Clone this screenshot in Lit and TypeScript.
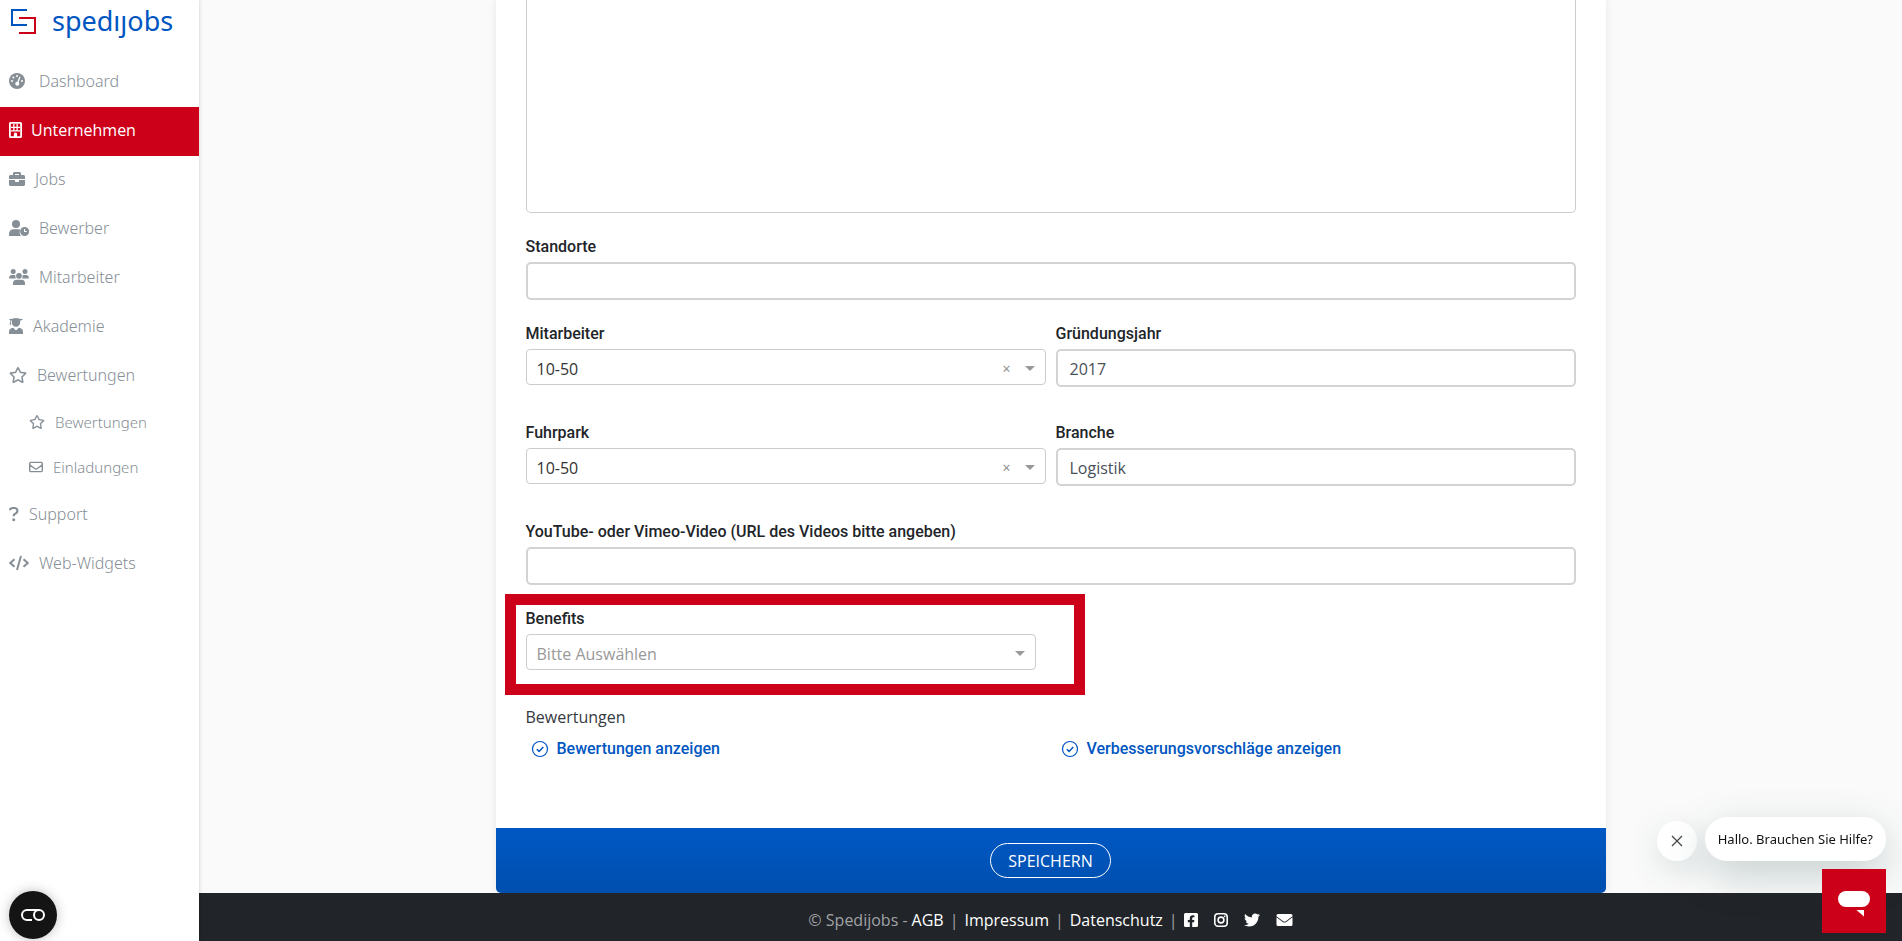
import { LitElement, html, css, svg, nothing } from "lit";
import { customElement } from "lit/decorators.js";
import { classMap } from "lit/directives/class-map.js";

const STAR =
  "M528.1 171.5L382 150.2 316.7 17.8c-11.7-23.6-45.6-23.9-57.4 0L194 150.2 47.9 171.5c-26.2 3.8-36.7 36.1-17.7 54.6l105.7 103-25 145.5c-4.5 26.3 23.2 46 46.4 33.7L288 439.6l130.7 68.7c23.2 12.2 50.9-7.4 46.4-33.7l-25-145.5 105.7-103c19-18.5 8.5-50.8-17.7-54.6zM388.6 312.3l23.7 138.4L288 385.4l-124.3 65.3 23.7-138.4-100.6-98 139-20.2 62.2-126 62.2 126 139 20.2-100.6 98z";
const BRIEFCASE =
  "M320 336c0 8.84-7.16 16-16 16h-96c-8.84 0-16-7.16-16-16v-48H0v144c0 25.6 22.4 48 48 48h416c25.6 0 48-22.4 48-48V288H320v48zm144-208h-80V80c0-25.6-22.4-48-48-48H176c-25.6 0-48 22.4-48 48v48H48c-25.6 0-48 22.4-48 48v80h512v-80c0-25.6-22.4-48-48-48zm-144 0H192V96h128v32z";
const TWITTER =
  "M459.37 151.716c.325 4.548.325 9.097.325 13.645 0 138.72-105.583 298.558-298.558 298.558-59.452 0-114.68-17.219-161.137-47.106 8.447.974 16.568 1.299 25.34 1.299 49.055 0 94.213-16.568 130.274-44.832-46.132-.975-84.792-31.188-98.112-72.772 6.498.974 12.995 1.624 19.818 1.624 9.421 0 18.843-1.3 27.614-3.573-48.081-9.747-84.143-51.98-84.143-102.985v-1.299c13.969 7.797 30.214 12.67 47.431 13.319-28.264-18.843-46.781-51.005-46.781-87.391 0-19.492 5.197-37.36 14.294-52.954 51.655 63.675 129.3 105.258 216.365 109.807-1.624-7.797-2.599-15.918-2.599-24.04 0-57.828 46.782-104.934 104.934-104.934 30.213 0 57.502 12.67 76.67 33.137 23.715-4.548 46.456-13.32 66.599-25.34-7.798 24.366-24.366 44.833-46.132 57.827 21.117-2.273 41.584-8.122 60.426-16.243-14.292 20.791-32.161 39.308-52.628 54.253z";
const FACEBOOK =
  "M400 32H48A48 48 0 0 0 0 80v352a48 48 0 0 0 48 48h137.25V327.69h-63V256h63v-54.64c0-62.15 37-96.48 93.67-96.48 27.14 0 55.52 4.84 55.52 4.84v61h-31.27c-30.81 0-40.42 19.12-40.42 38.73V256h68.78l-11 71.69h-57.78V480H400a48 48 0 0 0 48-48V80a48 48 0 0 0-48-48z";

const icon = (w: number, h: number, box: string, body: unknown) =>
  html`<svg width=${w} height=${h} viewBox=${box} fill="currentColor" aria-hidden="true">${body}</svg>`;

const icons = {
  gauge: icon(20, 16, "0 0 20 16", svg`
    <circle cx="8" cy="8" r="8"/>
    <g fill="#fff"><circle cx="8" cy="3" r="1"/><circle cx="4.4" cy="4.5" r="1"/><circle cx="3" cy="8" r="1"/><circle cx="13" cy="8" r="1"/>
    <path d="M10.5 3.4l1.1.5-2 5.3a2 2 0 1 1-1.3-.5z"/></g>`),
  building: icon(13, 16, "0 0 13 16", svg`
    <path fill-rule="evenodd" d="M1.500 0h10A1.500 1.500 0 0 1 13 1.500v13a1.500 1.500 0 0 1-1.500 1.500h-10A1.500 1.500 0 0 1 0 14.500v-13A1.500 1.500 0 0 1 1.500 0zM1.800 1.800v12.400h3.100V12a1.600 1.600 0 0 1 3.200 0v2.200h3.100V1.800z"/>
    <path d="M2 4.700h9V6H2zM2 8.300h9v1.300H2zM4.200 2h1.300v7.500H4.200zM7.500 2h1.300v7.500H7.500z"/>`),
  briefcase: icon(16, 16, "0 0 512 512", svg`<path d=${BRIEFCASE}/>`),
  userClock: icon(20, 16, "0 0 20 16", svg`
    <circle cx="7" cy="4" r="4"/>
    <path d="M4.500 9.200h5q1.100 0 2 .5a5.600 5.600 0 0 0 .4 6.300H0v-2.300a4.500 4.500 0 0 1 4.500-4.500z"/>
    <path fill-rule="evenodd" d="M15.600 7a4.500 4.500 0 1 1 0 9 4.500 4.500 0 0 1 0-9zm-.6 2v3h2.700v-1.100h-1.600V9z"/>`),
  users: icon(20, 16, "0 0 20 16", svg`
    <circle cx="4.200" cy="2.500" r="2.500"/><circle cx="16" cy="2.500" r="2.500"/><circle cx="10" cy="6.800" r="2.900"/>
    <path d="M2.800 6h2.700l.9.300A4.500 4.500 0 0 0 7 9.500H.2V8.700A2.700 2.700 0 0 1 2.800 6zM14.500 6h2.700a2.700 2.700 0 0 1 2.600 2.700v.8H13a4.500 4.500 0 0 0 .6-3.200zM7.500 10.700h5A3.500 3.500 0 0 1 16 14.200V16H4v-1.800a3.500 3.500 0 0 1 3.500-3.500z"/>`),
  graduate: icon(14, 16, "0 0 14 16", svg`
    <path d="M7 0l6.600 1.200q.8.300 0 .7l-2.400.6v2a4.200 4.200 0 0 1-8.400 0v-2l-1-.2v2l.6 2.500H.6l.5-2.500V2L.4 1.900q-.8-.4 0-.7zM4.200 9.700L7 12.600l2.800-2.900a4.500 4.500 0 0 1 4.200 4.500V16H0v-1.800a4.500 4.500 0 0 1 4.200-4.500z"/>`),
  star: icon(18, 16, "0 0 576 512", svg`<path d=${STAR}/>`),
  starSmall: icon(16, 14, "0 0 576 512", svg`<path d=${STAR}/>`),
  mail: icon(14, 14, "0 0 14 14", svg`
    <path d="M1.700 2.400h10.600a1 1 0 0 1 1 1v7.200a1 1 0 0 1-1 1H1.700a1 1 0 0 1-1-1V3.400a1 1 0 0 1 1-1zM1 5l4.700 3.500a2.200 2.200 0 0 0 2.600 0L13 5" fill="none" stroke="currentColor" stroke-width="1.400"/>`),
  question: icon(10, 16, "0 0 10 16", svg`
    <path d="M1.100 4.200V3.800Q1.300 2 4 2h1.500A2.800 2.800 0 0 1 7 7.200Q4.700 8.300 4.700 9.800v.4" fill="none" stroke="currentColor" stroke-width="2.200"/><circle cx="4.700" cy="13.700" r="1.500"/>`),
  code: icon(20, 16, "0 0 20 16", svg`
    <path d="M5.500 4.300L1.300 8l4.200 3.700M14.500 4.300L18.700 8l-4.200 3.700M12 .9L8 15.100" fill="none" stroke="currentColor" stroke-width="2"/>`),
  check: icon(18, 18, "0 0 18 18", svg`
    <circle cx="9" cy="9" r="7.500" fill="none" stroke="currentColor" stroke-width="1.200"/>
    <path d="M5.800 9.200l2.300 2.200 4.200-4.300" fill="none" stroke="currentColor" stroke-width="1.500"/>`),
  facebook: icon(14, 16, "0 0 448 512", svg`<path d=${FACEBOOK}/>`),
  instagram: icon(14, 16, "0 0 14 16", svg`
    <rect x=".8" y="1.800" width="12.400" height="12.400" rx="3.300" fill="none" stroke="currentColor" stroke-width="1.600"/>
    <circle cx="7" cy="8" r="2.900" fill="none" stroke="currentColor" stroke-width="1.600"/><circle cx="10.700" cy="4.300" r=".9"/>`),
  twitter: icon(16, 16, "0 0 512 512", svg`<path d=${TWITTER}/>`),
  envelope: icon(17, 16, "0 0 16 16", svg`
    <path d="M1.500 2h13A1.500 1.500 0 0 1 16 3.500v.8l-6.700 5a2.200 2.200 0 0 1-2.600 0L0 4.300v-.8A1.500 1.500 0 0 1 1.500 2zM0 5.300l6.200 4.600a3 3 0 0 0 3.600 0L16 5.300v7.200a1.500 1.500 0 0 1-1.500 1.500h-13A1.500 1.500 0 0 1 0 12.500z"/>`),
};

interface NavItem {
  label: string;
  glyph: unknown;
  active?: boolean;
  sub?: boolean;
}

const NAV: NavItem[] = [
  { label: "Dashboard", glyph: icons.gauge },
  { label: "Unternehmen", glyph: icons.building, active: true },
  { label: "Jobs", glyph: icons.briefcase },
  { label: "Bewerber", glyph: icons.userClock },
  { label: "Mitarbeiter", glyph: icons.users },
  { label: "Akademie", glyph: icons.graduate },
  { label: "Bewertungen", glyph: icons.star },
  { label: "Bewertungen", glyph: icons.starSmall, sub: true },
  { label: "Einladungen", glyph: icons.mail, sub: true },
  { label: "Support", glyph: icons.question },
  { label: "Web-Widgets", glyph: icons.code },
];

@customElement("side-nav")
class SideNav extends LitElement {
  static styles = css`
    :host { display: block; background: #fff; box-shadow: 0 0 4px rgba(0, 0, 0, 0.2); position: relative; }
    a { text-decoration: none; box-sizing: border-box; }
    svg { flex: none; }
    .logo { display: flex; align-items: center; gap: 16px; height: 46px; padding: 0 0 4px 11px; margin-bottom: 12px; color: #0056c1; font: 400 27px/34px "Noto Sans", sans-serif; }
    .item { display: flex; align-items: center; gap: 10px; height: 49px; padding: 0 0 4px 9px; color: #868e96; font-family: "Noto Sans", sans-serif; font-weight: 300; font-size: 16px; }
    .active { background: #cd0019; color: #fff; gap: 9px; font-family: "Open Sans", sans-serif; font-weight: 400; }
    .sub { height: 45px; padding-left: 29px; font-size: 15px; }
  `;
  render() {
    return html`
      <a class="logo" href="#">
        <svg width="25" height="26" viewBox="0 0 25 26" fill="none" stroke-width="2" aria-hidden="true">
          <path d="M16 2H1v15h15" stroke="#0056c1"/>
          <path d="M8 10h16v15H8" stroke="#cd0019"/>
        </svg>
        <span>spedıȷobs</span>
      </a>
      <nav>
        ${NAV.map((n) => html`<a href="#" class=${classMap({ item: true, active: !!n.active, sub: !!n.sub })}>${n.glyph}<span>${n.label}</span></a>`)}
      </nav>`;
  }
}

@customElement("app-root")
class AppRoot extends LitElement {
  static styles = css`
    :host { display: block; font: 400 16px/24px "Open Sans", sans-serif; color: #212529; }
    * { box-sizing: border-box; }
    .page { display: grid; grid-template-columns: 199px minmax(0, 1fr); min-height: 100vh; background: #fafafa; }
    .main { display: flex; flex-direction: column; }
    .card { width: 100%; max-width: 1110px; margin: 0 auto; flex: 1; display: flex; flex-direction: column; background: #fff; border-radius: 0 0 5px 5px; box-shadow: 0 0 8px rgba(0, 0, 0, 0.08); }
    .form { flex: 1; padding: 0 30px; }
    .field { display: flex; flex-direction: column; gap: 2px; margin-bottom: 21px; position: relative; }
    .pair { display: grid; grid-template-columns: 1fr 1fr; gap: 10px; margin-bottom: 12px; }
    label { font-family: "Roboto", sans-serif; font-weight: 500; line-height: 26px; }
    textarea { display: block; width: 100%; height: 213px; margin-bottom: 21px; border: 1px solid #ccc; border-top: 0; border-radius: 0 0 5px 5px; resize: none; background: #fff; }
    .text { width: 100%; height: 38px; border: 2px solid #d3d3d3; border-radius: 5px; padding: 2px 12px 0; background: #fff; font: inherit; color: #495057; }
    .picker { display: grid; align-items: center; position: relative; }
    select { appearance: none; width: 100%; height: 36px; border: 1px solid #ccc; border-radius: 4px; padding: 3px 60px 0 10px; background: #fff; font: inherit; color: #333; }
    .empty { color: #999; }
    .tools { position: absolute; right: 11px; padding-top: 3px; display: flex; align-items: center; gap: 14px; pointer-events: none; color: #999; }
    .clear { pointer-events: auto; border: 0; padding: 0; background: none; color: #888; font: 14px/16px "Open Sans", sans-serif; }
    .arrow { border: 5px solid transparent; border-top-color: #999; border-bottom: 0; }
    .benefits { width: calc(50% - 15px); margin-bottom: 35px; }
    .highlight { position: absolute; inset: -12px -49px -25px -21px; border: 11px solid #cd0019; pointer-events: none; }
    .heading { margin: 0 0 8px; font-size: 16px; font-weight: 400; line-height: 24px; color: #343a40; }
    .links { display: grid; grid-template-columns: 1fr 1fr; gap: 10px; padding-bottom: 66px; }
    .links a { display: flex; align-items: center; gap: 8px; padding-left: 5px; color: #0056c1; font-family: "Roboto", sans-serif; font-weight: 500; text-decoration: none; }
    .save-bar { display: flex; align-items: center; justify-content: center; height: 65px; background: linear-gradient(#0058c4, #004fae); border-radius: 0 0 5px 5px; }
    .save { height: 35px; padding: 0 17px; border: 1px solid #fff; border-radius: 18px; background: none; color: #fff; font: inherit; }
    footer { display: flex; align-items: center; justify-content: center; gap: 6px; height: 48px; padding-top: 6px; background: #212429; color: #a0a2a5; line-height: 24px; }
    footer a { color: #fff; text-decoration: none; }
    .copy { margin-right: -2px; }
    .social { display: flex; gap: 16px; }
    .social a, .social svg { display: block; }
    .consent { position: fixed; left: 9px; bottom: 2px; width: 48px; height: 48px; border: 0; border-radius: 50%; padding: 0; background: #141414; box-shadow: 0 0 12px rgba(0, 0, 0, 0.25); display: grid; place-items: center; }
    .chat { position: fixed; right: 16px; bottom: 8px; display: flex; flex-direction: column; align-items: flex-end; gap: 8px; }
    .prompt { display: flex; align-items: flex-end; gap: 8px; }
    .close { width: 40px; height: 40px; border: 0; border-radius: 50%; padding: 0; background: #fff; box-shadow: 0 10px 32px rgba(40, 80, 80, 0.15); display: grid; place-items: center; }
    .bubble { height: 44px; border-radius: 22px; padding: 0 13px; background: #fff; color: #111; font: 400 13px/44px "Noto Sans", sans-serif; box-shadow: 0 14px 40px rgba(40, 80, 80, 0.25); }
    .launcher { width: 64px; height: 64px; border: 0; padding: 6px 0 0; background: #cd0019; display: grid; place-items: center; position: relative; }
  `;

  private input(id: string, label: string, value = "") {
    return html`<div class="field"><label for=${id}>${label}</label><input class="text" id=${id} type="text" .value=${value}></div>`;
  }

  private picker(id: string, label: string, value: string, clearable: boolean) {
    return html`
      <label for=${id}>${label}</label>
      <div class="picker">
        <select id=${id} class=${classMap({ empty: !clearable })}><option>${value}</option></select>
        <div class="tools">
          ${clearable ? html`<button class="clear" type="button" aria-label="Auswahl löschen">×</button>` : nothing}
          <span class="arrow"></span>
        </div>
      </div>`;
  }

  render() {
    return html`
      <div class="page">
        <side-nav></side-nav>
        <div class="main">
          <form class="card">
            <div class="form">
              <textarea aria-label="Beschreibung"></textarea>
              ${this.input("standorte", "Standorte")}
              <div class="pair">
                <div class="field">${this.picker("mitarbeiter", "Mitarbeiter", "10-50", true)}</div>
                ${this.input("jahr", "Gründungsjahr", "2017")}
              </div>
              <div class="pair">
                <div class="field">${this.picker("fuhrpark", "Fuhrpark", "10-50", true)}</div>
                ${this.input("branche", "Branche", "Logistik")}
              </div>
              ${this.input("video", "YouTube- oder Vimeo-Video (URL des Videos bitte angeben)")}
              <div class="field benefits">
                ${this.picker("benefits", "Benefits", "Bitte Auswählen", false)}
                <div class="highlight"></div>
              </div>
              <h2 class="heading">Bewertungen</h2>
              <div class="links">
                <a href="#">${icons.check}<span>Bewertungen anzeigen</span></a>
                <a href="#">${icons.check}<span>Verbesserungsvorschläge anzeigen</span></a>
              </div>
            </div>
            <div class="save-bar"><button class="save" type="button">SPEICHERN</button></div>
          </form>
          <footer>
            <span class="copy">© Spedijobs -</span>
            <a href="#">AGB</a><span>|</span>
            <a href="#">Impressum</a><span>|</span>
            <a href="#">Datenschutz</a><span>|</span>
            <div class="social">
              <a href="#" aria-label="Facebook">${icons.facebook}</a>
              <a href="#" aria-label="Instagram">${icons.instagram}</a>
              <a href="#" aria-label="Twitter">${icons.twitter}</a>
              <a href="#" aria-label="E-Mail">${icons.envelope}</a>
            </div>
          </footer>
        </div>
      </div>
      <button class="consent" type="button" aria-label="Cookie-Einstellungen">
        <svg width="24" height="12" viewBox="0 0 24 12" fill="none" stroke="#fff" stroke-width="2" aria-hidden="true">
          <path d="M11 11H6A5 5 0 0 1 6 1h12"/><circle cx="18" cy="6" r="5"/>
        </svg>
      </button>
      <div class="chat">
        <div class="prompt">
          <button class="close" type="button" aria-label="Schließen">
            <svg width="12" height="12" viewBox="0 0 12 12" stroke="#444" stroke-width="1.200" aria-hidden="true"><path d="M1 1l10 10M11 1L1 11"/></svg>
          </button>
          <div class="bubble">Hallo. Brauchen Sie Hilfe?</div>
        </div>
        <button class="launcher" type="button" aria-label="Chat öffnen">
          <svg width="32" height="26" viewBox="0 0 32 26" fill="#fff" aria-hidden="true"><rect width="32" height="16" rx="8"/><path d="M18.500 19H26v6.500z"/></svg>
        </button>
      </div>`;
  }
}
